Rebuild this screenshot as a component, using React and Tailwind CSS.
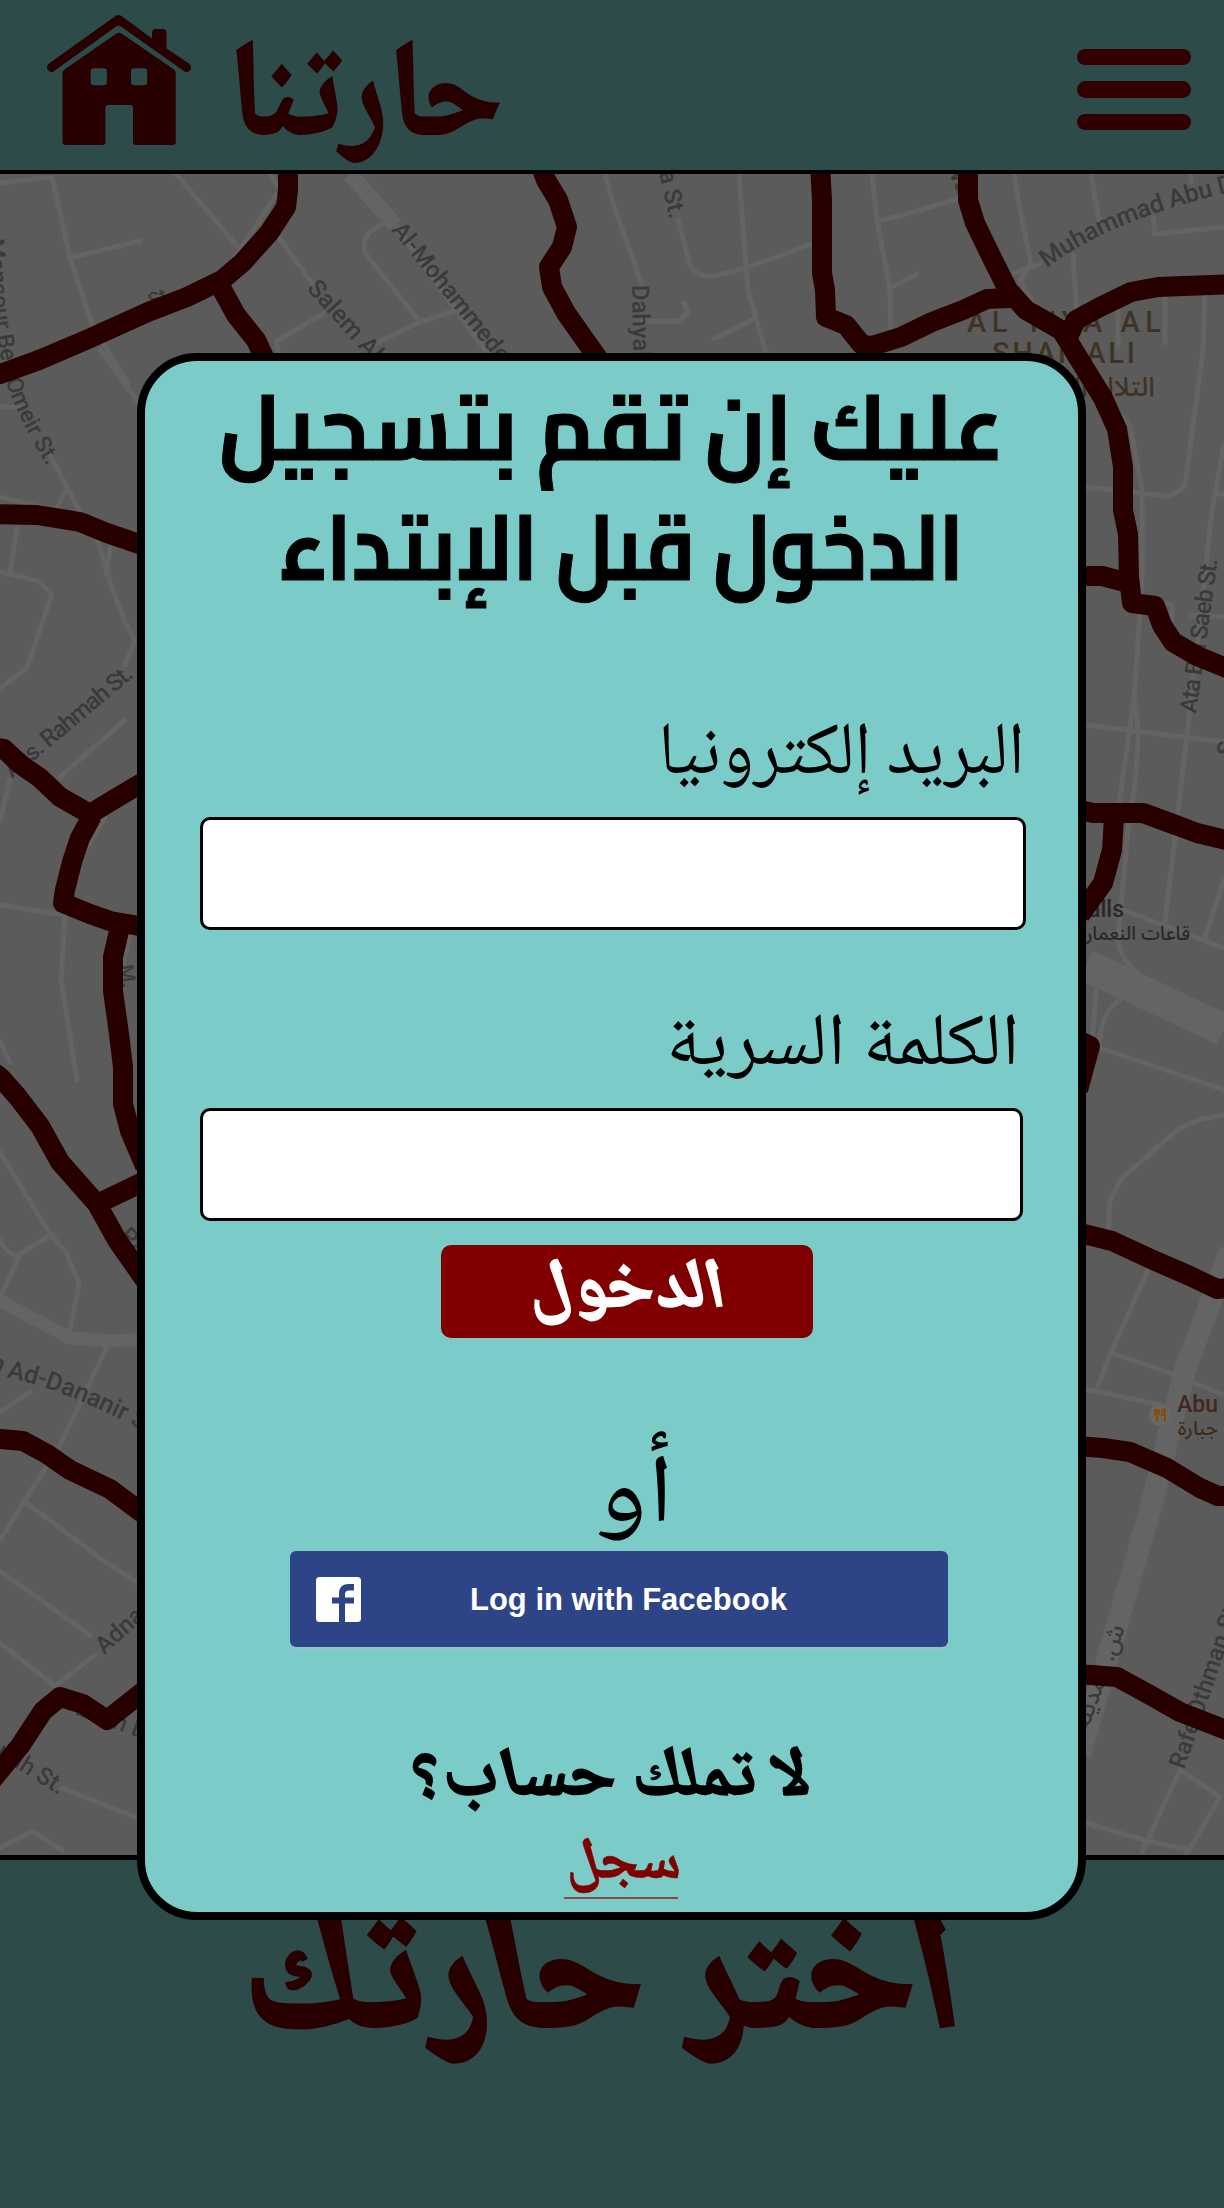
import React from "react";

const NASKH = "font-['Noto_Naskh_Arabic','DejaVu_Sans',sans-serif]";
const KUFI = "font-['Cairo','Noto_Kufi_Arabic','DejaVu_Sans',sans-serif]";

const thinStreets = [
  "M0 183 L52 177 L70 258 L92 325 L128 384",
  "M70 258 L140 241",
  "M176 174 L237 246",
  "M276 195 L240 250 L225 275",
  "M270 174 L278 186",
  "M277 235 L312 283",
  "M387 221 L370 232 Q362 240 365 253 L420 322 L372 345",
  "M420 322 L460 309",
  "M324 313 L276 342 L285 380",
  "M605 174 L612 200",
  "M612 200 L642 285",
  "M678 220 L690 265 Q698 278 714 276 L746 268 L812 244",
  "M739 174 L748 290 L768 360",
  "M872 174 L877 220 L890 290 L891 340",
  "M878 221 L910 213 L958 199",
  "M890 288 L917 274",
  "M642 321 L680 321 L688 312 L684 303",
  "M714 339 L752 320",
  "M1014 174 L1020 210 L1031 264 L1020 280 L1040 315 L1062 345",
  "M1014 273 L1040 264",
  "M1091 174 L1099 220",
  "M1073 255 L1077 320",
  "M1153 217 L1155 234 L1224 227",
  "M1191 174 L1191 182",
  "M1165 290 L1165 343",
  "M1118 308 L1118 345",
  "M1205 290 L1203 350 L1185 485 Q1180 494 1165 496 L1086 487",
  "M1112 405 L1130 425 L1142 490 L1142 580 L1134 700 L1116 825",
  "M1134 700 Q1144 735 1128 830 L1118 940 Q1120 960 1140 975",
  "M1224 445 L1212 510 L1190 710 L1164 930",
  "M1086 725 L1224 742",
  "M1146 597 L1172 605 L1172 625",
  "M1215 494 L1224 494",
  "M1190 615 L1224 617",
  "M1110 905 L1224 948",
  "M1224 880 L1204 940",
  "M1096 990 L1092 1045 L1120 1055 L1224 1090",
  "M1099 1045 Q1102 1010 1120 1000",
  "M1224 1115 Q1190 1120 1175 1132 L1122 1178 L1110 1200 L1108 1234",
  "M1150 1266 L1112 1350 L1098 1386",
  "M1112 1353 L1175 1375 L1224 1395",
  "M1086 1389 L1160 1405",
  "M1086 1823 L1147 1841 L1190 1850",
  "M1180 1770 L1142 1852",
  "M1180 1770 L1220 1797 L1186 1855",
  "M100 350 L138 402",
  "M0 407 L20 407",
  "M50 455 L80 512 L98 540 L108 577 L125 622 L135 640 L125 665",
  "M0 497 L60 512",
  "M66 490 L57 508",
  "M17 528 L10 573",
  "M0 572 L38 581 L52 594 L27 668 L0 688",
  "M110 548 L106 575",
  "M125 720 L60 777",
  "M10 780 L0 820",
  "M105 818 L85 850",
  "M0 905 L65 915",
  "M65 915 L61 980 L77 1080",
  "M130 935 L122 970",
  "M0 1042 L10 1062",
  "M0 1152 L50 1234 L66 1252 L79 1284 L70 1330",
  "M0 1240 Q10 1258 20 1254 L52 1234",
  "M20 1254 L0 1298",
  "M107 1347 L60 1445 L0 1540",
  "M24 1501 L100 1558 L138 1583",
  "M0 1571 L90 1635 M0 1643 L55 1686 L95 1655",
  "M62 1788 L138 1818",
  "M0 1848 L32 1831 L62 1850",
  "M0 1412 L30 1392",
];

const wideStreets = [
  "M300 174 L345 225",
  "M0 1301 L70 1338 L110 1341 L138 1340",
  "M1086 965 L1224 1030",
  "M1230 1250 L1185 1370 L1150 1510 L1080 1755",
];

const borders = [
  "M288 164 L288 190 L286 207 L269 233 L242 263 L222 280 L187 297 L148 312 L86 340 L39 360 L0 374 L-12 377",
  "M218 282 L236 315 L256 340 L272 374",
  "M540 164 L546 180 L558 200 L567 227 L562 247 L549 267 L552 287 L566 313 L585 340 L602 364",
  "M820 164 L822 200 L822 273 L825 290 L826 317 L846 325 L862 345 L872 346 L901 337 L932 322 L963 310 L987 299 L1010 298",
  "M968 164 L968 200 L975 223 L993 260 L1008 290 L1026 310 L1061 330 L1068 341 L1087 372 L1103 398 L1117 429 L1123 467 L1123 510 L1128 534 L1129 577 L1132 603 L1155 606 L1162 625 L1173 642 L1197 656 L1234 671",
  "M1234 284 L1158 287 L1131 292 L1100 307 L1076 320 L1069 335",
  "M1076 576 L1102 576 L1125 582",
  "M1076 809 L1093 813 L1143 813 L1173 824 L1197 833 L1234 842",
  "M1114 817 L1112 850 L1103 883 L1080 915",
  "M1076 1039 L1090 1046 L1078 1090",
  "M1076 1232 L1112 1241 L1153 1260 L1190 1276 L1217 1289 L1234 1288",
  "M1076 1446 L1103 1448 L1130 1452 L1167 1468 L1200 1488 L1218 1496 L1234 1496",
  "M1076 1674 L1117 1677 L1150 1695 L1180 1712 L1234 1733",
  "M-10 514 L37 515 L80 522 L107 533 L145 546",
  "M-10 747 L4 749 L20 764 L40 778 L60 797 L90 814 L113 800 L145 781",
  "M92 816 L80 838 L72 862 L65 890 L63 903 L90 914 L110 921 L145 927",
  "M119 931 L113 957 L113 991 L119 1034 L123 1067 L123 1104 L130 1131 L145 1166",
  "M-10 1070 L0 1077 L17 1096 L40 1126 L60 1162 L97 1204 L117 1240 L145 1280",
  "M97 1204 L145 1181",
  "M-10 1439 L0 1439 L23 1441 L47 1454 L70 1470 L110 1489 L145 1515",
  "M-8 1780 L20 1746 L43 1711 L60 1697 L83 1704 L107 1720 L145 1690",
];

function NeighbourhoodMap() {
  return (
    <svg
      className="block h-[1681px] w-full bg-[#5b5b5b]"
      viewBox="0 174 1224 1681"
      fontFamily="Roboto, sans-serif"
      fontSize="24"
      fontWeight="500"
      fill="#3a3a3a"
    >
      <g fill="none" stroke="#646464" strokeLinejoin="round" strokeLinecap="round" strokeWidth="5">
        {thinStreets.map((d) => <path key={d} d={d} />)}
      </g>
      <g fill="none" stroke="#646464" strokeLinejoin="round">
        <path d={wideStreets[0]} strokeWidth="16" transform="translate(50 0)" />
        <path d="M395 225 L500 370" strokeWidth="6" />
        <path d={wideStreets[1]} strokeWidth="13" />
        <path d={wideStreets[2]} strokeWidth="32" />
        <path d={wideStreets[3]} strokeWidth="22" />
      </g>

      <defs>
        <path id="mansour" d="M-14 200 C-10 290 -4 345 8 388 Q22 425 47 466" />
        <path id="dananir" d="M-54 1350 L14 1379 Q75 1393 160 1440" />
        <path id="muhammad" d="M1047 268 Q1120 212 1270 184" />
      </defs>

      <text transform="translate(391 230) rotate(51)">Al-Mohammedeyah</text>
      <text transform="translate(306 289) rotate(48)" fontSize="25">Salem Al-Da</text>
      <text fontSize="23" textAnchor="end"><textPath href="#mansour" startOffset="100%">Mansour Ben Omeir St.</textPath></text>
      <text transform="translate(12 779) rotate(-40)" textLength="160">Ans. Rahmah St.</text>
      <text fontSize="25"><textPath href="#dananir">Umm Ad-Dananir St.</textPath></text>
      <text transform="translate(104 1655) rotate(-42)">Adnan</text>
      <text transform="translate(74 1714) rotate(20)">Eben El</text>
      <text transform="translate(59 1795) rotate(32)" textAnchor="end">Jannah St.</text>
      <text transform="translate(118 1237) rotate(45)">Par</text>
      <text transform="translate(119 966) rotate(80)" fontSize="20">M.</text>
      <text transform="translate(152 308) rotate(-25)" fontSize="20">St.</text>
      <text transform="translate(656 160) rotate(77)">aa St.</text>
      <text transform="translate(632 285) rotate(89)">Dahyah</text>
      <text transform="translate(945 165) rotate(66)">Wa</text>
      <text fontSize="25" letterSpacing="-0.2"><textPath href="#muhammad">Muhammad Abu Dahab</textPath></text>
      <text transform="translate(1196 714) rotate(-82)" textLength="156">Ata Bin Saeb St.</text>
      <text transform="translate(1184 1770) rotate(-71)">Rafe Othman St.</text>
      <g fill="#3f3326" fontSize="29">
        <text x="967" y="332" textLength="194">AL TIYA AL</text>
        <text x="992" y="363" textLength="143">SHAMALI</text>
        <text x="1155" y="396" direction="rtl" fontSize="27" fontFamily="Noto Sans Arabic, DejaVu Sans, sans-serif">التلال الشمالي</text>
      </g>
      <g fill="#282828">
        <text x="1124" y="917" textAnchor="end" fontSize="23">Halls</text>
        <text x="1190" y="940" direction="rtl" fontSize="19" fontFamily="Noto Sans Arabic, DejaVu Sans, sans-serif">قاعات النعمان</text>
      </g>
      <g fill="#40281f">
        <text x="1177" y="1412" fontSize="23">Abu</text>
        <text x="1218" y="1435" direction="rtl" fontSize="20" fontFamily="Noto Sans Arabic, DejaVu Sans, sans-serif">جبارة</text>
      </g>
      <text transform="translate(1125 1628) rotate(-70)" direction="rtl" fontSize="24" fontFamily="Noto Sans Arabic, DejaVu Sans, sans-serif">ش. المدينة</text>
      <text transform="translate(1233 757) rotate(-80)">S</text>

      <circle cx="1160" cy="1415" r="11" fill="#686868" />
      <path
        d="M1155 1409 v4 q0 2 2 2 v7 M1159 1409 v4 q0 2 -2 2 M1157 1409 v4 M1165 1422 v-13 q-3 1 -3 6 h3"
        fill="none"
        stroke="#8a4a08"
        strokeWidth="2"
      />

      <g fill="none" stroke="#280000" strokeWidth="20" strokeLinejoin="round">
        {borders.map((d) => <path key={d} d={d} />)}
      </g>
    </svg>
  );
}

function HouseLogo() {
  return (
    <svg className="mt-[14px] ml-[46px] h-[132px] w-[146px] shrink-0" viewBox="46 14 146 132" fill="#280000">
      <path d="M115.5 16 Q118.5 13.800 121.500 16 L152 38.500 V33 Q152 29 156 29 H162.500 Q166.500 29 166.500 33 V48.500 L189 63.500 Q192 66.500 190.500 69.500 Q187.500 73.500 184.500 71.500 L121 26.500 Q118.500 25 116 26.500 L53.500 71.500 Q50.500 73.500 47.500 69.500 Q46 66.500 49 63.500 Z" />
      <path
        fillRule="evenodd"
        d="M116.500 33.500 Q119 32 121.500 33.500 L174 69.500 Q175.700 71 175.700 73 V142 Q175.700 145 172.700 145 H136 Q133 145 133 142 V108 Q133 105 130 105 H108.400 Q105.400 105 105.400 108 V142 Q105.400 145 102.400 145 H65.500 Q62.500 145 62.500 142 V73 Q62.500 71 64.500 69.500 Z M94 68.300 Q90.700 68.300 90.700 71.500 V82 Q90.700 85.200 94 85.200 H103.500 Q106.900 85.200 106.900 82 V71.500 Q106.900 68.300 103.500 68.300 Z M134.500 68.300 Q131 68.300 131 71.500 V82 Q131 85.200 134.500 85.200 H144 Q147.200 85.200 147.200 82 V71.500 Q147.200 68.300 144 68.300 Z"
      />
    </svg>
  );
}

function Header() {
  return (
    <header className="flex h-[174px] items-start border-b-4 border-black bg-[#2c4b49]">
      <HouseLogo />
      <h1
        dir="rtl"
        className={`${NASKH} ml-[36px] h-[170px] origin-left scale-x-[.89] text-[138px] leading-[209px] font-bold whitespace-nowrap text-[#280000] [-webkit-text-stroke:2px_#280000]`}
      >
        حارتنا
      </h1>
      <button className="mt-[49px] mr-[33px] ml-auto flex w-[114px] flex-col gap-4" aria-label="القائمة">
        <span className="h-[16.4px] w-full rounded-full bg-[#330000]" />
        <span className="h-[16.4px] w-full rounded-full bg-[#330000]" />
        <span className="h-[16.4px] w-full rounded-full bg-[#330000]" />
      </button>
    </header>
  );
}

function LoginDialog() {
  return (
    <div
      role="dialog"
      dir="ltr"
      className="absolute top-[353px] left-[137px] flex h-[1567px] w-[949px] flex-col items-start rounded-[60px] border-8 border-black bg-[#7bccc8] text-black"
    >
      <h2 dir="rtl" className={`${KUFI} mt-[6px] w-full text-center text-[92px] leading-[120px] font-bold whitespace-nowrap [-webkit-text-stroke:1px_#000]`}>
        <span className="block scale-x-[.94]">عليك إن تقم بتسجيل</span>
        <span className="block translate-x-[10px] scale-x-[.887]">الدخول قبل الإبتداء</span>
      </h2>

      <label dir="rtl" className={`${NASKH} mt-[103px] mr-[53px] origin-right self-end scale-x-[.95] text-[74px] leading-[94px] whitespace-nowrap`}>
        البريد إلكترونيا
      </label>
      <input className="mt-[13px] ml-[55px] h-[113px] w-[826px] rounded-[10px] border-3 border-black bg-white px-4 text-4xl" />

      <label dir="rtl" className={`${NASKH} mt-[71px] mr-[58px] origin-right self-end scale-x-[1.05] text-[74px] leading-[94px] whitespace-nowrap`}>
        الكلمة السرية
      </label>
      <input type="password" className="mt-[13px] ml-[55px] h-[113px] w-[823px] rounded-[10px] border-3 border-black bg-white px-4 text-4xl" />

      <button className="mt-[24px] ml-[296px] flex h-[93px] w-[372px] justify-center rounded-[10px] bg-[#800000] text-white">
        <span dir="rtl" className={`${NASKH} scale-x-[1.04] skew-x-[10deg] text-[70px] leading-[93px] font-bold whitespace-nowrap [-webkit-text-stroke:1.5px_#fff]`}>
          الدخول
        </span>
      </button>

      <p dir="rtl" className={`${NASKH} mt-[112px] ml-[23px] w-full scale-x-[1.15] text-center text-[97px] leading-[100px]`}>
        أو
      </p>

      <button className="mt-px ml-[145px] flex h-[96px] w-[658px] items-center rounded-[6px] bg-[#2d4486] text-white shadow-[0_3px_1px_#8cc9c6]">
        <svg className="ml-[26px] size-[45px]" viewBox="0 0 45 45">
          <rect width="45" height="45" rx="3.500" fill="#fff" />
          <path d="M23 45 V26.500 H16 V20.500 H23 V17 Q23 7 32 7 H38 V13.500 H33 Q29 13.500 29 17.500 V20.500 H38 V26.500 H29 V45 Z" fill="#2d4486" />
        </svg>
        <span className="ml-[109px] font-['Liberation_Sans',Arial,sans-serif] text-[31px] leading-none font-bold whitespace-nowrap">
          Log in with Facebook
        </span>
      </button>

      <p dir="rtl" className={`${NASKH} mt-[93px] w-full scale-x-[1.03] skew-x-[10deg] text-center text-[69px] leading-[80px] font-bold whitespace-nowrap [-webkit-text-stroke:1.5px_#000]`}>
        لا تملك حساب؟
      </p>
      <a href="#register" className="mt-[15px] ml-[419px] flex w-[114px] justify-center border-b-2 border-[#8a4a4c] pb-[2px] text-[#800000]">
        <span dir="rtl" className={`${NASKH} translate-x-px skew-x-[10deg] text-[59px] leading-[60px] font-bold whitespace-nowrap [-webkit-text-stroke:0.5px_#800000]`}>
          سجل
        </span>
      </a>
    </div>
  );
}

export default function App() {
  return (
    <div className="relative h-[2208px] w-[1224px] overflow-hidden bg-[#2c4b49]">
      <Header />
      <NeighbourhoodMap />
      <footer className="flex h-[353px] justify-center border-t-[5px] border-black bg-[#2c4b49] pt-[41px]">
        <h2 dir="rtl" className={`${NASKH} translate-x-px scale-x-[.95] skew-x-[10deg] text-[176px] leading-[176px] font-bold whitespace-nowrap text-[#280000] [-webkit-text-stroke:5px_#280000]`}>
          اختر حارتك
        </h2>
      </footer>
      <LoginDialog />
    </div>
  );
}
